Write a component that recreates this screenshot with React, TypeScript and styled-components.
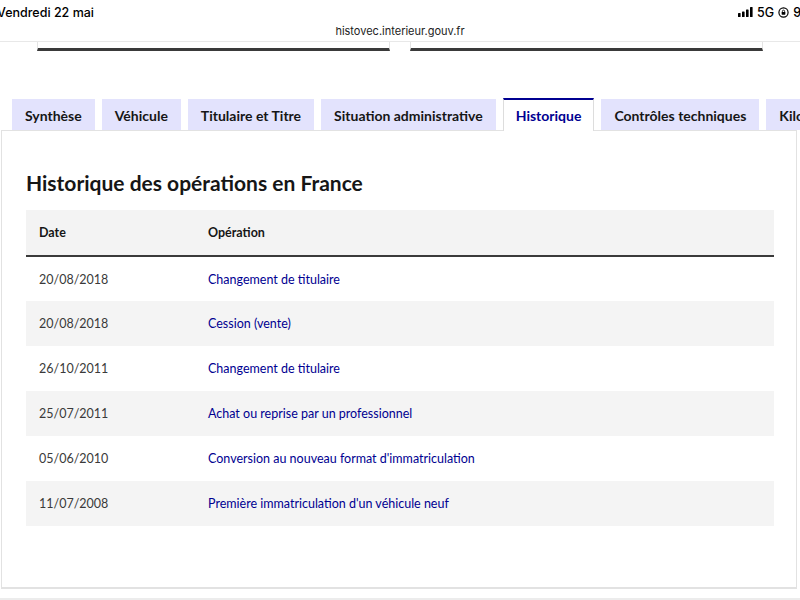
import React from 'react'
import styled, { createGlobalStyle } from 'styled-components'

const GlobalStyle = createGlobalStyle`
  html, body { margin: 0; padding: 0; background: #fff; }
  body { width: 800px; height: 600px; overflow: hidden; font-family: "Lato", "Noto Sans", sans-serif; }
`

const tabs = [
  'Synthèse',
  'Véhicule',
  'Titulaire et Titre',
  'Situation administrative',
  'Historique',
  'Contrôles techniques',
  'Kilométrage',
]

const rows = [
  ['20/08/2018', 'Changement de titulaire'],
  ['20/08/2018', 'Cession (vente)'],
  ['26/10/2011', 'Changement de titulaire'],
  ['25/07/2011', 'Achat ou reprise par un professionnel'],
  ['05/06/2010', "Conversion au nouveau format d'immatriculation"],
  ['11/07/2008', "Première immatriculation d'un véhicule neuf"],
]

const App = () => {
  return (
    <Page>
      <GlobalStyle />
      <StatusBar>
        <Day>Vendredi 22 mai</Day>
        <Indicators>
          <svg width="15" height="10" viewBox="0 0 15 10">
            <rect x="0" y="6" width="2.6" height="4" rx="0.6" fill="#000" />
            <rect x="4" y="4.5" width="2.6" height="5.5" rx="0.6" fill="#000" />
            <rect x="8" y="2.5" width="2.6" height="7.5" rx="0.6" fill="#000" />
            <rect x="12" y="0" width="2.6" height="10" rx="0.6" fill="#000" />
          </svg>
          <span>5G</span>
          <svg width="11" height="11" viewBox="0 0 12 12">
            <circle cx="6" cy="6" r="5" fill="none" stroke="#000" strokeWidth="1.3" />
            <rect x="4" y="5.5" width="4" height="3" rx="0.5" fill="#000" />
            <path d="M4.8 5.5 V4.6 a1.2 1.2 0 0 1 2.4 0 V5.5" fill="none" stroke="#000" strokeWidth="0.9" />
          </svg>
          <span>9</span>
        </Indicators>
      </StatusBar>
      <UrlBar>histovec.interieur.gouv.fr</UrlBar>
      <Cards>
        <CardEdge />
        <CardEdge />
      </Cards>
      <TabList>
        {tabs.map((t) => (
          <Tab key={t} $active={t === 'Historique'}>{t}</Tab>
        ))}
      </TabList>
      <Panel>
        <Heading>Historique des opérations en France</Heading>
        <Table>
          <thead>
            <tr>
              <Th style={{ width: 156 }}>Date</Th>
              <Th>Opération</Th>
            </tr>
          </thead>
          <tbody>
            {rows.map(([d, op], i) => (
              <Row key={i} $odd={i % 2 === 1}>
                <DateCell>{d}</DateCell>
                <OpCell>{op}</OpCell>
              </Row>
            ))}
          </tbody>
        </Table>
      </Panel>
      <BottomLine />
    </Page>
  )
}

const Page = styled.div`
  width: 800px;
  height: 600px;
  overflow: hidden;
  background: #fff;
`

const StatusBar = styled.div`
  height: 24px;
  display: flex;
  justify-content: space-between;
  align-items: center;
  font-family: "Inter", "Liberation Sans", sans-serif;
  font-size: 12.5px;
  font-weight: 500;
  color: #000;
`

const Day = styled.span`
  margin-left: -3px;
`

const Indicators = styled.div`
  display: flex;
  align-items: center;
  gap: 4px;
  margin-right: -1px;
`

const UrlBar = styled.div`
  height: 17px;
  text-align: center;
  font-family: "Inter", "Liberation Sans", sans-serif;
  font-size: 11px;
  color: #222;
  line-height: 14px;
  border-bottom: 1px solid #e8e8e8;
`

const Cards = styled.div`
  display: flex;
  gap: 20px;
  padding: 0 37px;
`

const CardEdge = styled.div`
  flex: 1;
  height: 6px;
  border: 1px solid #e4e4e4;
  border-top: none;
  border-bottom: 3px solid #3a3a3a;
`

const TabList = styled.div`
  display: flex;
  gap: 7px;
  padding: 48px 0 0 12px;
  white-space: nowrap;
  position: relative;
  z-index: 1;
`

const Tab = styled.div<{ $active?: boolean }>`
  flex: none;
  box-sizing: border-box;
  padding: 0 12px;
  display: flex;
  align-items: center;
  font-size: 14px;
  font-weight: 700;
  color: ${(p) => (p.$active ? '#000091' : '#161616')};
  background: ${(p) => (p.$active ? '#fff' : '#e3e3fd')};
  border-top: 2px solid ${(p) => (p.$active ? '#000091' : 'transparent')};
  border-left: 1px solid ${(p) => (p.$active ? '#ddd' : 'transparent')};
  border-right: 1px solid ${(p) => (p.$active ? '#ddd' : 'transparent')};
  height: ${(p) => (p.$active ? '33px' : '31px')};
  margin-top: ${(p) => (p.$active ? '-1px' : '0')};
  margin-bottom: ${(p) => (p.$active ? '-1px' : '0')};
`

const Panel = styled.div`
  margin-left: 1px;
  width: 796px;
  height: 459px;
  box-sizing: border-box;
  border: 1px solid #e2e2e2;
  border-bottom: 2px solid #e2e2e2;
  padding: 38px 24px 0 24px;
`

const Heading = styled.h2`
  margin: 0 0 13px 0;
  font-size: 21px;
  font-weight: 700;
  color: #161616;
  line-height: 28px;
`

const Table = styled.table`
  width: 748px;
  border-collapse: collapse;
  font-size: 12.5px;
`

const Th = styled.th`
  text-align: left;
  height: 45px;
  padding: 0 0 0 13px;
  background: #f3f3f3;
  border-bottom: 2px solid #3a3a3a;
  font-weight: 700;
  color: #161616;
`

const Row = styled.tr<{ $odd?: boolean }>`
  height: 45px;
  background: ${(p) => (p.$odd ? '#f4f4f4' : '#fff')};
`

const DateCell = styled.td`
  padding: 0 0 0 13px;
  color: #3a3a3a;
`

const OpCell = styled.td`
  padding: 0 0 0 13px;
  color: #000091;
`

const BottomLine = styled.div`
  margin-top: 9px;
  border-top: 2px solid #ececec;
`

export default App
